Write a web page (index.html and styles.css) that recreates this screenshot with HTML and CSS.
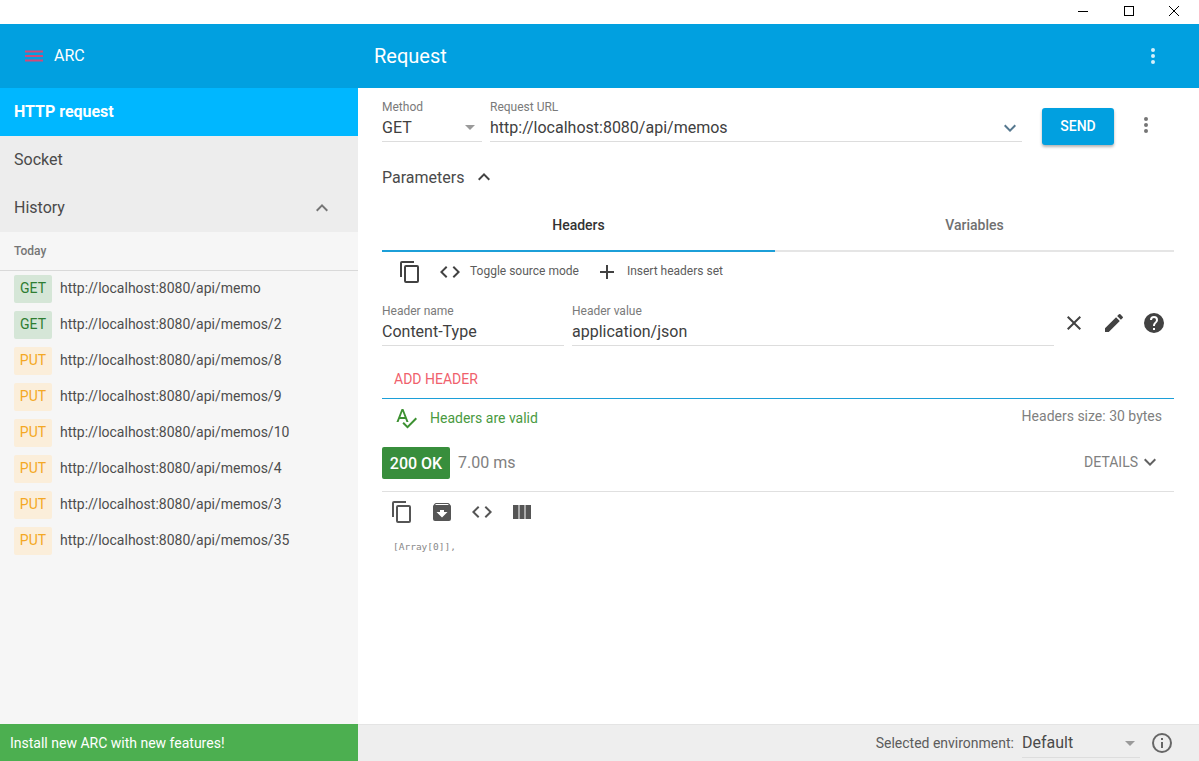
FILE: index.html
```html
<!DOCTYPE html>
<html lang="en">
<head>
<meta charset="utf-8">
<title>ARC</title>
<link rel="stylesheet" href="styles.css">
</head>
<body>
<div class="titlebar">
  <svg class="win" width="18" height="18" viewBox="0 0 18 18"><path d="M4 9h10" stroke="#000" stroke-width="1" shape-rendering="crispEdges"/></svg>
  <svg class="win" width="18" height="18" viewBox="0 0 18 18"><rect x="4.500" y="4.500" width="9" height="9" fill="none" stroke="#000"/></svg>
  <svg class="win" width="18" height="18" viewBox="0 0 18 18"><path d="M4 4l10 10M14 4L4 14" stroke="#000" fill="none"/></svg>
</div>
<div class="app">
  <aside class="side">
    <div class="side-head">
      <svg class="burger" width="24" height="24" viewBox="0 0 24 24"><path d="M3 6.500h18v2H3zM3 11h18v2H3zM3 15.500h18v2H3z" fill="#d24a78"/></svg>
      <span class="brand">ARC</span>
    </div>
    <div class="nav active">HTTP request</div>
    <div class="nav">Socket</div>
    <div class="nav nav-history">History
      <svg width="24" height="24" viewBox="0 0 24 24"><path d="M7.400 15.400L12 10.800l4.600 4.600L18 14l-6-6-6 6z" fill="#757575"/></svg>
    </div>
    <div class="today">Today</div>
    <ul class="history">
      <li><span class="badge get">GET</span><span class="url">http://localhost:8080/api/memo</span></li>
      <li><span class="badge get">GET</span><span class="url">http://localhost:8080/api/memos/2</span></li>
      <li><span class="badge put">PUT</span><span class="url">http://localhost:8080/api/memos/8</span></li>
      <li><span class="badge put">PUT</span><span class="url">http://localhost:8080/api/memos/9</span></li>
      <li><span class="badge put">PUT</span><span class="url">http://localhost:8080/api/memos/10</span></li>
      <li><span class="badge put">PUT</span><span class="url">http://localhost:8080/api/memos/4</span></li>
      <li><span class="badge put">PUT</span><span class="url">http://localhost:8080/api/memos/3</span></li>
      <li><span class="badge put">PUT</span><span class="url">http://localhost:8080/api/memos/35</span></li>
    </ul>
    <div class="install">Install new ARC with new features!</div>
  </aside>
  <main class="main">
    <header class="main-head">
      <span>Request</span>
      <svg width="24" height="24" viewBox="0 0 24 24"><path d="M12 8a2 2 0 100-4 2 2 0 000 4zm0 2a2 2 0 100 4 2 2 0 000-4zm0 6a2 2 0 100 4 2 2 0 000-4z" fill="#d5f0fb"/></svg>
    </header>
    <div class="content">
      <div class="url-row">
        <div class="field f-method">
          <label>Method</label>
          <div class="val">GET<i class="caret"></i></div>
        </div>
        <div class="field f-url">
          <label>Request URL</label>
          <div class="val">http://localhost:8080/api/memos
            <svg class="url-chev" width="24" height="24" viewBox="0 0 24 24"><path d="M7.400 8.600L12 13.200l4.600-4.600L18 10l-6 6-6-6z" fill="#56788f"/></svg>
          </div>
        </div>
        <button class="send">SEND</button>
        <svg class="more" width="24" height="24" viewBox="0 0 24 24"><path d="M12 8a2 2 0 100-4 2 2 0 000 4zm0 2a2 2 0 100 4 2 2 0 000-4zm0 6a2 2 0 100 4 2 2 0 000-4z" fill="#757575"/></svg>
      </div>
      <div class="params">Parameters
        <svg width="24" height="24" viewBox="0 0 24 24"><path d="M7.400 15.400L12 10.800l4.600 4.600L18 14l-6-6-6 6z" fill="#424242"/></svg>
      </div>
      <div class="tabs">
        <div class="tab on">Headers</div>
        <div class="tab">Variables</div>
      </div>
      <div class="tools">
        <svg class="ic-copy" width="24" height="24" viewBox="0 0 24 24"><path d="M16 1H4a2 2 0 00-2 2v14h2V3h12V1zm3 4H8a2 2 0 00-2 2v14a2 2 0 002 2h11a2 2 0 002-2V7a2 2 0 00-2-2zm0 16H8V7h11v14z" fill="#424242"/></svg>
        <svg class="ic-code" width="24" height="24" viewBox="0 0 24 24"><path d="M9.400 16.600L4.800 12l4.600-4.600L8 6l-6 6 6 6zm5.200 0l4.600-4.600-4.600-4.600L16 6l6 6-6 6z" fill="#424242"/></svg>
        <span class="tool-txt t1">Toggle source mode</span>
        <svg class="ic-plus" width="24" height="24" viewBox="0 0 24 24"><path d="M19 13h-6v6h-2v-6H5v-2h6V5h2v6h6z" fill="#424242"/></svg>
        <span class="tool-txt">Insert headers set</span>
      </div>
      <div class="hdr-row">
        <div class="field f-name">
          <label>Header name</label>
          <div class="val">Content-Type</div>
        </div>
        <div class="field f-value">
          <label>Header value</label>
          <div class="val">application/json</div>
        </div>
        <div class="hdr-icons">
          <svg width="24" height="24" viewBox="0 0 24 24"><path d="M19 6.410L17.590 5 12 10.590 6.410 5 5 6.410 10.590 12 5 17.590 6.410 19 12 13.410 17.590 19 19 17.590 13.410 12z" fill="#424242"/></svg>
          <svg width="24" height="24" viewBox="0 0 24 24"><path d="M3 17.250V21h3.750L17.810 9.940l-3.750-3.750L3 17.250zM20.710 7.040a1 1 0 000-1.410l-2.340-2.340a1 1 0 00-1.410 0l-1.830 1.830 3.750 3.750 1.830-1.830z" fill="#424242"/></svg>
          <svg width="24" height="24" viewBox="0 0 24 24"><path d="M12 2a10 10 0 100 20 10 10 0 000-20zm1 17h-2v-2h2v2zm2.070-7.750l-.9.920C13.450 12.900 13 13.500 13 15h-2v-.5c0-1.100.45-2.100 1.170-2.830l1.240-1.260c.37-.360.590-.860.590-1.410a2 2 0 00-4 0H8a4 4 0 018 0c0 .880-.360 1.680-.930 2.250z" fill="#424242"/></svg>
        </div>
      </div>
      <div class="add-row"><span>ADD HEADER</span></div>
      <div class="valid-row">
        <svg width="24" height="24" viewBox="0 0 24 24"><path d="M12.450 16h2.090L9.430 3H7.570L2.460 16h2.090l1.120-3h5.650l1.130 3zm-6.020-5L8.500 5.480 10.570 11H6.430zm15.160.590l-8.090 8.090L9.830 16l-1.410 1.410 5.090 5.090L23 13l-1.410-1.410z" fill="#3d9132"/></svg>
        <span class="valid-txt">Headers are valid</span>
        <span class="size">Headers size: 30 bytes</span>
      </div>
      <div class="status-row">
        <span class="status">200 OK</span>
        <span class="time">7.00 ms</span>
        <span class="details">DETAILS
          <svg width="24" height="24" viewBox="0 0 24 24"><path d="M7.400 8.600L12 13.200l4.600-4.600L18 10l-6 6-6-6z" fill="#616161"/></svg>
        </span>
      </div>
      <div class="resp-tools">
        <svg width="24" height="24" viewBox="0 0 24 24"><path d="M16 1H4a2 2 0 00-2 2v14h2V3h12V1zm3 4H8a2 2 0 00-2 2v14a2 2 0 002 2h11a2 2 0 002-2V7a2 2 0 00-2-2zm0 16H8V7h11v14z" fill="#555"/></svg>
        <svg width="24" height="24" viewBox="0 0 24 24"><path d="M20.540 5.230l-1.390-1.680A1.450 1.450 0 0018 3H6c-.470 0-.880.210-1.160.550L3.460 5.230C3.170 5.570 3 6.020 3 6.500V19a2 2 0 002 2h14a2 2 0 002-2V6.500c0-.480-.170-.930-.460-1.270zM12 17.500L6.500 12H10v-2h4v2h3.500L12 17.500zM5.120 5l.810-1h12l.940 1H5.120z" fill="#555"/></svg>
        <svg width="24" height="24" viewBox="0 0 24 24"><path d="M9.400 16.600L4.800 12l4.600-4.600L8 6l-6 6 6 6zm5.200 0l4.600-4.600-4.600-4.600L16 6l6 6-6 6z" fill="#555"/></svg>
        <svg width="24" height="24" viewBox="0 0 24 24"><path d="M3 5h5.500v14H3zM9.500 5h5v14h-5zM15.500 5H21v14h-5.500z" fill="#555"/></svg>
      </div>
      <div class="json">[Array[0]],</div>
    </div>
    <footer class="foot">
      <span class="env-label">Selected environment:</span>
      <div class="env-select">Default<i class="caret"></i></div>
      <svg width="24" height="24" viewBox="0 0 24 24"><path d="M11 7h2v2h-2zm0 4h2v6h-2zm1-9a10 10 0 100 20 10 10 0 000-20zm0 18a8 8 0 110-16 8 8 0 010 16z" fill="#666"/></svg>
    </footer>
  </main>
</div>
</body>
</html>
```
FILE: styles.css
```css
* { box-sizing: border-box; }
html, body { margin: 0; height: 100%; overflow: hidden; }
body { font-family: Roboto, "Liberation Sans", sans-serif; color: #404040; background: #fff; }
svg { display: block; flex: none; }

.titlebar { height: 24px; display: flex; justify-content: flex-end; align-items: center; padding: 0 16px 2px 0; gap: 27.500px; background: #fff; }
.app { display: flex; height: 737px; }

.side { width: 358px; flex: none; display: flex; flex-direction: column; background: #f6f6f6; }
.side-head { height: 64px; background: #01a0e0; color: #fff; display: flex; align-items: center; padding-left: 22px; gap: 8px; font-size: 16px; }
.brand { padding-bottom: 1px; }
.nav { height: 48px; display: flex; align-items: center; padding: 0 14px 2px; font-size: 16px; background: #ededed; color: #4a4a4a; }
.nav.active { background: #00b7ff; color: #fff; font-weight: 700; letter-spacing: -.02px; }
.nav-history { justify-content: space-between; padding-right: 24px; padding-bottom: 0; line-height: 1; }
.today { height: 39px; padding: 12px 14px 0; font-size: 12px; font-weight: 500; color: #757575; border-bottom: 1px solid #d9d9d9; }
.history { list-style: none; margin: 0; padding: 0; flex: 1; }
.history li { height: 36px; display: flex; align-items: center; padding-left: 14px; font-size: 14px; color: #4d4d4d; }
.url { padding-bottom: 2px; }
.badge { width: 38px; height: 28px; margin-right: 8px; padding-bottom: 2px; display: flex; align-items: center; justify-content: center; font-size: 14px; border-radius: 2px; }
.badge.get { background: #d5e6d7; color: #2e7d32; }
.badge.put { background: #fbeeda; color: #f4a824; }
.install { height: 37px; background: #4caf50; color: #fff; display: flex; align-items: center; padding-left: 10px; font-size: 14px; }

.main { flex: 1; display: flex; flex-direction: column; min-width: 0; }
.main-head { height: 64px; background: #01a0e0; color: #fff; display: flex; align-items: center; justify-content: space-between; padding: 0 34px 0 16px; font-size: 20px; font-weight: 400; }
.content { flex: 1; padding: 0 25px 0 24px; min-height: 0; }

.url-row { display: flex; height: 70px; padding-top: 12px; }
.field label { display: block; font-size: 12px; line-height: 14px; color: #7a7a7a; }
.field .val { display: flex; align-items: center; justify-content: space-between; height: 28px; font-size: 16px; border-bottom: 1px solid #ddd; }
.f-method { width: 100px; margin-right: 8px; }
.f-url { width: 532px; margin-right: 20px; }
.caret { width: 0; height: 0; border-left: 5px solid transparent; border-right: 5px solid transparent; border-top: 5px solid #9a9a9a; margin-right: 7px; }
.send { width: 72px; height: 37px; margin-top: 8px; padding: 0 0 2px; border: 0; border-radius: 3px; background: #01a0e0; color: #fff; font: 500 14px Roboto, sans-serif; box-shadow: 0 2px 3px rgba(0,0,0,.3); }
.more { margin: 13px 0 0 20px; }

.params { height: 32px; display: flex; align-items: center; gap: 8px; font-size: 16px; color: #4a4a4a; margin-top: 3px; }
.tabs { display: flex; margin-top: 11px; }
.tab { flex: 1; display: flex; align-items: center; justify-content: center; font-size: 14px; font-weight: 500; color: #707070; height: 48px; padding-bottom: 4px; border-bottom: 2px solid #e5e5e5; }
.tab.on { flex: 0 0 393px; color: #333; border-bottom-color: #1c9fd8; }

.tools { display: flex; align-items: center; height: 40px; padding-left: 16px; }
.tools svg { margin-right: 8px; }
.tools .ic-copy { margin-right: 16px; }
.tool-txt { font-size: 12px; color: #5c5c5c; margin-top: -2px; }
.t1 { margin-right: 16px; }

.hdr-row { display: flex; padding-top: 12px; height: 68px; }
.f-name { width: 182px; margin-right: 8px; }
.f-value { width: 482px; }
.hdr-icons { display: flex; gap: 16px; margin-left: 8px; padding-top: 7px; }

.add-row { height: 40px; padding: 0 12px; border-bottom: 1px solid #1c9fd8; display: flex; align-items: center; font-size: 14px; color: #f0606c; margin-top: -1px; }

.valid-row { display: flex; align-items: center; height: 38px; padding: 0 12px; font-size: 14px; }
.valid-txt { color: #4a9a3f; margin-left: 12px; }
.size { margin-left: auto; font-size: 14px; color: #808080; margin-top: -4px; }

.status-row { display: flex; align-items: center; height: 55px; padding-bottom: 2px; border-bottom: 1px solid #e0e0e0; }
.status { width: 68px; height: 32px; background: #388e3c; color: #fff; font-size: 16px; font-weight: 500; display: flex; align-items: center; justify-content: center; border-radius: 2px; }
.time { margin-left: 8px; padding-bottom: 2px; font-size: 16px; color: #808080; }
.details { margin-left: auto; margin-right: 12px; padding-bottom: 2px; display: flex; align-items: center; font-size: 14px; color: #808080; }

.resp-tools { display: flex; gap: 16px; padding: 8px 0 0 8px; height: 40px; }
.json { padding: 9px 0 0 11px; font: 9.500px "DejaVu Sans Mono", monospace; color: #888; }

.foot { height: 37px; flex: none; background: #eeeeee; display: flex; align-items: center; justify-content: flex-end; padding-right: 25px; border-top: 1px solid #e4e4e4; }
.env-label { font-size: 14px; color: #5c5c5c; margin-right: 8px; }
.env-select { width: 118px; height: 30px; display: flex; align-items: center; justify-content: space-between; font-size: 16px; color: #4a4a4a; border-bottom: 1px solid #ddd; margin-right: 10px; }
.env-select .caret { margin-right: 5px; margin-top: 2px; }
```
